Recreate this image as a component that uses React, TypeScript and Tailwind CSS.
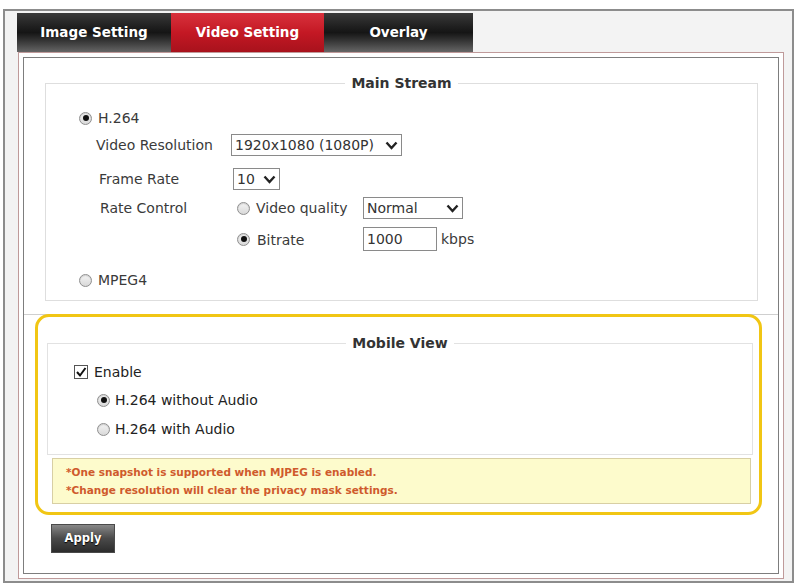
import React from 'react';

const Radio: React.FC<{ checked?: boolean }> = ({ checked }) => (
  <span className="w-[13px] h-[13px] rounded-full border border-[#8f8f8f] bg-gradient-to-b from-[#f4f4f4] to-[#d9d9d9] flex items-center justify-center shrink-0 shadow-[inset_0_1px_1px_rgba(0,0,0,0.15)]">
    {checked && <span className="w-[6px] h-[6px] rounded-full bg-[#111]" />}
  </span>
);

const Chevron: React.FC = () => (
  <svg width="13" height="9" viewBox="0 0 13 9" className="shrink-0">
    <polyline points="1.5,1.5 6.5,7 11.5,1.5" fill="none" stroke="#222" strokeWidth="2.4" />
  </svg>
);

const Select: React.FC<{ value: string; width: string }> = ({ value, width }) => (
  <div className={`${width} h-[22px] border border-[#8a8a8a] bg-white flex items-center justify-between pl-[3px] pr-[3px] text-[#333]`}>
    <span>{value}</span>
    <Chevron />
  </div>
);

const tabs = [
  { name: 'Image Setting', w: 'w-[154px]', active: false },
  { name: 'Video Setting', w: 'w-[153px]', active: true },
  { name: 'Overlay', w: 'w-[149px]', active: false },
];

export default function App() {
  return (
    <div className="w-[798px] h-[585px] bg-white overflow-hidden font-['DejaVu_Sans',sans-serif] text-[14px] text-[#3a3a3a]">
      <div className="ml-[3px] mt-[9px] w-[791px] h-[574px] border-2 border-[#8c8c8c] bg-[#f3f3f3] pt-[2px] pl-[12px]">
        {/* tabs */}
        <div className="flex w-[456px] h-[39px] bg-gradient-to-b from-[#3a3a3a] via-[#151515] to-[#666]">
          {tabs.map((t) => (
            <div
              key={t.name}
              className={`${t.w} h-full flex items-center justify-center text-white font-bold text-[13.5px] ${
                t.active ? 'bg-gradient-to-b from-[#d8303c] via-[#c41824] to-[#a8121c]' : ''
              }`}
            >
              {t.name}
            </div>
          ))}
        </div>

        {/* content frame */}
        <div className="ml-[1px] w-[766px] h-[527px] border border-[#bf9a9a] bg-white p-[4px]">
          <div className="w-full h-full border border-[#7d7d7d] bg-white flex flex-col">
            {/* Main Stream */}
            <fieldset className="ml-[21px] mt-[16px] w-[713px] border border-[#dedede] pb-[10px]">
              <legend className="mx-auto px-[6px] font-bold text-[#333] leading-[18px]">Main Stream</legend>
              <div className="mt-[16px] h-[20px] flex items-center ml-[33px]">
                <Radio checked />
                <span className="ml-[6px]">H.264</span>
              </div>
              <div className="mt-[6px] h-[22px] flex items-center ml-[50px]">
                <span className="w-[135px]">Video Resolution</span>
                <Select value="1920x1080 (1080P)" width="w-[171px]" />
              </div>
              <div className="mt-[12px] h-[22px] flex items-center ml-[53px]">
                <span className="w-[134px]">Frame Rate</span>
                <Select value="10" width="w-[47px]" />
              </div>
              <div className="mt-[7px] h-[22px] flex items-center ml-[54px]">
                <span className="w-[137px]">Rate Control</span>
                <Radio />
                <span className="ml-[6px] w-[107px]">Video quality</span>
                <Select value="Normal" width="w-[100px]" />
              </div>
              <div className="mt-[8px] h-[24px] flex items-center ml-[191px]">
                <Radio checked />
                <span className="ml-[7px] w-[106px] pt-[3px]">Bitrate</span>
                <div className="w-[74px] h-[24px] border border-[#8a8a8a] bg-white flex items-center pl-[3px] text-[#333]">1000</div>
                <span className="ml-[4px]">kbps</span>
              </div>
              <div className="mt-[19px] h-[20px] flex items-center ml-[33px]">
                <Radio />
                <span className="ml-[6px]">MPEG4</span>
              </div>
            </fieldset>

            <div className="mt-[13px] h-px bg-[#cfcfcf]" />

            {/* Mobile View */}
            <div className="ml-[11px] -mt-px w-[727px] h-[201px] border-[3px] border-[#f1c614] rounded-[14px] bg-white">
              <fieldset className="ml-[9px] mt-[17px] w-[706px] border border-[#e2e2e2] pb-[15px]">
                <legend className="mx-auto px-[6px] font-bold text-[#333] leading-[18px]">Mobile View</legend>
                <div className="mt-[10px] h-[20px] flex items-center ml-[26px] text-[#222]">
                  <span className="w-[14px] h-[14px] border border-[#555] bg-white flex items-center justify-center">
                    <svg width="12" height="12" viewBox="0 0 12 12">
                      <polyline points="2,6 5,9.5 10.5,2" fill="none" stroke="#111" strokeWidth="2" />
                    </svg>
                  </span>
                  <span className="ml-[6px]">Enable</span>
                </div>
                <div className="mt-[8px] h-[20px] flex items-center ml-[49px] text-[#222]">
                  <Radio checked />
                  <span className="ml-[5px]">H.264 without Audio</span>
                </div>
                <div className="mt-[9px] h-[20px] flex items-center ml-[49px] text-[#222]">
                  <Radio />
                  <span className="ml-[5px]">H.264 with Audio</span>
                </div>
              </fieldset>
              <div className="ml-[14px] mt-[3px] w-[699px] h-[46px] border border-[#d8cfa4] bg-[#fdfbcc] pl-[13px] flex flex-col justify-center gap-[4px] text-[10.5px] font-bold leading-[14px] text-[#cf5a2c]">
                <span>*One snapshot is supported when MJPEG is enabled.</span>
                <span>*Change resolution will clear the privacy mask settings.</span>
              </div>
            </div>

            {/* Apply */}
            <div className="ml-[27px] mt-[9px] w-[64px] h-[29px] border border-[#4a4a4a] bg-gradient-to-b from-[#888] via-[#4a4a4a] to-[#2c2c2c] flex items-center justify-center text-white font-bold text-[11.5px] [text-shadow:0_1px_1px_#000]">
              Apply
            </div>
          </div>
        </div>
      </div>
    </div>
  );
}
